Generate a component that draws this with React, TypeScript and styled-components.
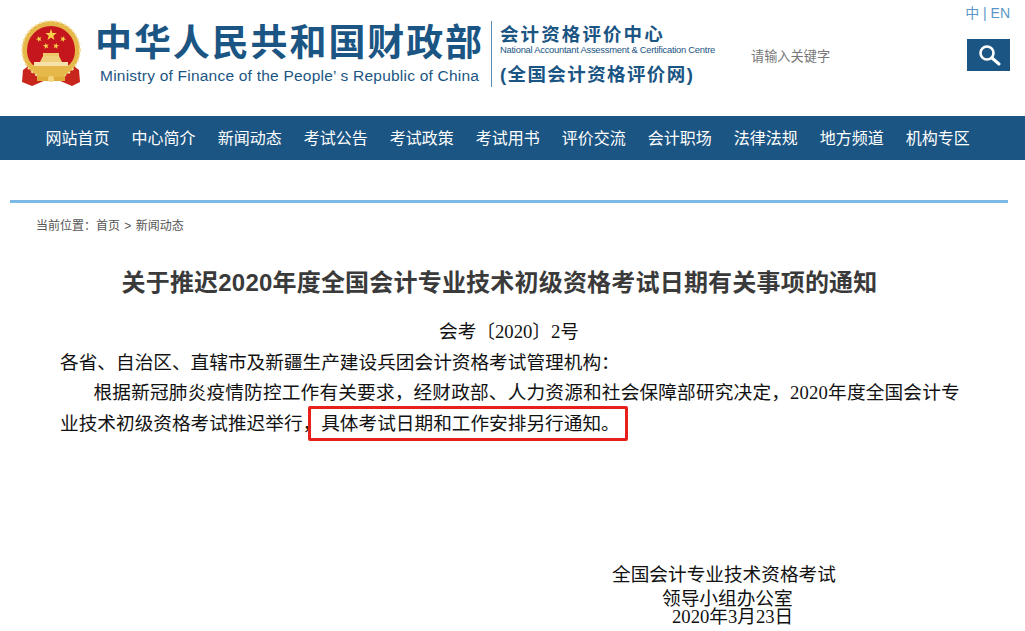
import React from 'react';
import styled, { createGlobalStyle } from 'styled-components';

const GlobalStyle = createGlobalStyle`
  html, body {
    margin: 0;
    padding: 0;
    background: #fff;
    overflow: hidden;
  }
`;

const cjk = `"Liberation Sans", "Noto Sans CJK SC", sans-serif`;
const serif = `"Liberation Serif", "Noto Sans CJK SC", serif`;

const PageWrap = styled.div`
  width: 1025px;
  height: 631px;
  overflow: hidden;
  font-family: ${cjk};
`;

const Header = styled.header`
  height: 116px;
  display: flex;
  padding: 20px 15px 0 20px;
  box-sizing: border-box;
`;

const Emblem = styled.svg`
  width: 64px;
  height: 66px;
  flex: none;
`;

const MinistryBlock = styled.div`
  margin-left: 13px;
  width: 394px;
  flex: none;
`;

const MinistryName = styled.div`
  font-size: 37px;
  line-height: 47px;
  margin-left: -2px;
  font-weight: 700;
  color: #1b5583;
  letter-spacing: 1.9px;
  white-space: nowrap;
`;

const MinistryEnglish = styled.div`
  font-size: 15.5px;
  line-height: 18px;
  margin: 0 0 0 3px;
  color: #1b5583;
  letter-spacing: 0.22px;
  white-space: nowrap;
`;

const CentreBlock = styled.div`
  margin: 1px 0 0 0;
  height: 66px;
  border-left: 1px solid #5b8db3;
  padding-left: 8px;
  width: 240px;
  flex: none;
  color: #1b5583;
`;

const CentreName = styled.div`
  font-size: 18.5px;
  line-height: 24px;
  margin-top: 2px;
  font-weight: 700;
  letter-spacing: 2.1px;
  white-space: nowrap;
`;

const CentreEnglish = styled.div`
  font-size: 9.4px;
  line-height: 10px;
  margin-top: -2px;
  letter-spacing: -0.25px;
  white-space: nowrap;
`;

const CentreWeb = styled.div`
  font-size: 18.5px;
  line-height: 24px;
  margin-top: 8px;
  font-weight: 700;
  letter-spacing: 1.4px;
  white-space: nowrap;
`;

const SearchInput = styled.div`
  margin-top: 28px;
  margin-left: 11px;
  font-size: 13.2px;
  line-height: 17px;
  color: #777;
  width: 136px;
  flex: none;
`;

const HeaderRight = styled.div`
  margin-top: -16px;
  display: flex;
  flex-direction: column;
  align-items: flex-end;
  flex: 1;
`;

const LangLinks = styled.div`
  font-size: 14px;
  line-height: 18px;
  color: #5a96c8;
  white-space: nowrap;
`;

const SearchButton = styled.div`
  width: 43px;
  height: 32px;
  margin-top: 17px;
  background: #1b5583;
  display: flex;
  align-items: center;
  justify-content: center;
`;

const NavBar = styled.nav`
  height: 44px;
  background: #1b5583;
  display: flex;
  align-items: flex-start;
  padding-left: 45.6px;
  gap: 22px;
`;

const NavItem = styled.a`
  color: #fff;
  font-size: 16px;
  font-family: "Noto Sans CJK SC", sans-serif;
  line-height: 43px;
  white-space: nowrap;
`;

const Main = styled.main`
  margin: 40px 17px 0 10px;
  border-top: 3px solid #7db9e6;
`;

const Breadcrumb = styled.div`
  margin: 15px 0 0 26px;
  font-size: 12px;
  line-height: 16px;
  word-spacing: 1px;
  color: #555;
`;

const Title = styled.h1`
  margin: 33px 0 0;
  padding-right: 19px;
  text-align: center;
  font-size: 24px;
  letter-spacing: 0.2px;
  line-height: 32px;
  font-weight: 700;
  color: #3a3a3a;
`;

const Article = styled.article`
  margin: 18px 0 0 50px;
  width: 902px;
  font-family: ${serif};
  font-size: 18.67px;
  color: #111;
`;

const DocNumber = styled.p`
  margin: 0;
  padding-right: 4px;
  line-height: 30.5px;
  text-align: center;
`;

const Para = styled.p<{ $indent?: boolean }>`
  margin: 0;
  line-height: 30.5px;
  text-indent: ${p => (p.$indent ? '33.5px' : '0')};
`;

const WideRun = styled.span`
  letter-spacing: 0.17px;
`;

const Marked = styled.span`
  position: relative;

  &::after {
    content: '';
    position: absolute;
    left: -13px;
    right: -8px;
    top: -7px;
    bottom: -7px;
    border: 3px solid #e8201c;
    border-radius: 2px;
  }
`;

const Signature = styled.div`
  margin: 124px 0 0 500px;
  width: 426px;
  font-family: ${serif};
  font-size: 18.67px;
  color: #111;
`;

const SignLine = styled.div<{ $indent: number }>`
  padding-left: ${p => p.$indent}px;
  line-height: 24px;
  height: 24px;
`;

const SignDate = styled.div`
  padding-left: 162px;
  margin-top: -3px;
  line-height: 18px;
`;

const navItems = ['网站首页', '中心简介', '新闻动态', '考试公告', '考试政策', '考试用书', '评价交流', '会计职场', '法律法规', '地方频道', '机构专区'];

const starPath = (cx: number, cy: number, r: number, rot = 0) => {
  const pts: string[] = [];
  for (let i = 0; i < 10; i++) {
    const rad = i % 2 === 0 ? r : r * 0.4;
    const a = (Math.PI / 5) * i - Math.PI / 2 + rot;
    pts.push(`${(cx + rad * Math.cos(a)).toFixed(1)},${(cy + rad * Math.sin(a)).toFixed(1)}`);
  }
  return pts.join(' ');
};

const NationalEmblem = () => (
  <Emblem viewBox="0 0 64 66">
    <path d="M9 44 L7 47 L3 50 L2 62 L12 66 L26 60 L38 60 L52 66 L60 62 L59 50 L55 47 L53 44 Z" fill="#c8261c" />
    <ellipse cx="31" cy="30" rx="29" ry="29" fill="#e6b84a" />
    <ellipse cx="31" cy="30" rx="29" ry="29" fill="none" stroke="#f5e0a0" strokeWidth="2" strokeDasharray="2 3" />
    <path d="M7 30 A24 24 0 0 1 55 30 C55 38 52 42 49 45 L13 45 C10 42 7 38 7 30 Z" fill="#c4161c" />
    <polygon points={starPath(31, 15, 6)} fill="#f7d24a" />
    <polygon points={starPath(19, 19, 3.2, -0.4)} fill="#f7d24a" />
    <polygon points={starPath(26, 26, 3.2, -0.2)} fill="#f7d24a" />
    <polygon points={starPath(36, 26, 3.2, 0.2)} fill="#f7d24a" />
    <polygon points={starPath(43, 19, 3.2, 0.4)} fill="#f7d24a" />
    <path d="M23 37 L39 37 L39 33 L23 33 Z" fill="#eec76a" />
    <path d="M20 42 L42 42 L39 36 L23 36 Z" fill="#f0cf7a" />
    <rect x="14" y="42" width="34" height="4" fill="#f6e2a8" />
    <path d="M17 55 Q31 46 45 55 L45 58 L17 58 Z" fill="#e6b84a" />
    <rect x="17" y="57" width="28" height="4" fill="#e0ad3a" />
    <circle cx="31" cy="59" r="3" fill="#f4d67e" />
  </Emblem>
);

export default function App() {
  return (
    <PageWrap>
      <GlobalStyle />
      <Header>
        <NationalEmblem />
        <MinistryBlock>
          <MinistryName>中华人民共和国财政部</MinistryName>
          <MinistryEnglish>Ministry of Finance of the People’ s Republic of China</MinistryEnglish>
        </MinistryBlock>
        <CentreBlock>
          <CentreName>会计资格评价中心</CentreName>
          <CentreEnglish>National Accountant Assessment &amp; Certification Centre</CentreEnglish>
          <CentreWeb>(全国会计资格评价网)</CentreWeb>
        </CentreBlock>
        <SearchInput>请输入关键字</SearchInput>
        <HeaderRight>
          <LangLinks>中 | EN</LangLinks>
          <SearchButton>
            <svg width="24" height="24" viewBox="0 0 24 24" fill="none">
              <circle cx="10" cy="10" r="6.5" stroke="#fff" strokeWidth="2.6" />
              <path d="M15 15 L22 21" stroke="#fff" strokeWidth="3" strokeLinecap="round" />
            </svg>
          </SearchButton>
        </HeaderRight>
      </Header>
      <NavBar>
        {navItems.map(item => (
          <NavItem key={item}>{item}</NavItem>
        ))}
      </NavBar>
      <Main>
        <Breadcrumb>当前位置：首页 &gt; 新闻动态</Breadcrumb>
        <Title>关于推迟2020年度全国会计专业技术初级资格考试日期有关事项的通知</Title>
        <Article>
          <DocNumber>会考〔2020〕2号</DocNumber>
          <Para>各省、自治区、直辖市及新疆生产建设兵团会计资格考试管理机构：</Para>
          <Para $indent>
            <WideRun>根据新冠肺炎疫情防控工作有关要求，经财政部、人力资源和社会保障部研究决定，2020年度全国会计专</WideRun>
            业技术初级资格考试推迟举行，
            <Marked>具体考试日期和工作安排另行通知。</Marked>
          </Para>
        </Article>
        <Signature>
          <SignLine $indent={102}>全国会计专业技术资格考试</SignLine>
          <SignLine $indent={152}>领导小组办公室</SignLine>
          <SignDate>2020年3月23日</SignDate>
        </Signature>
      </Main>
    </PageWrap>
  );
}
